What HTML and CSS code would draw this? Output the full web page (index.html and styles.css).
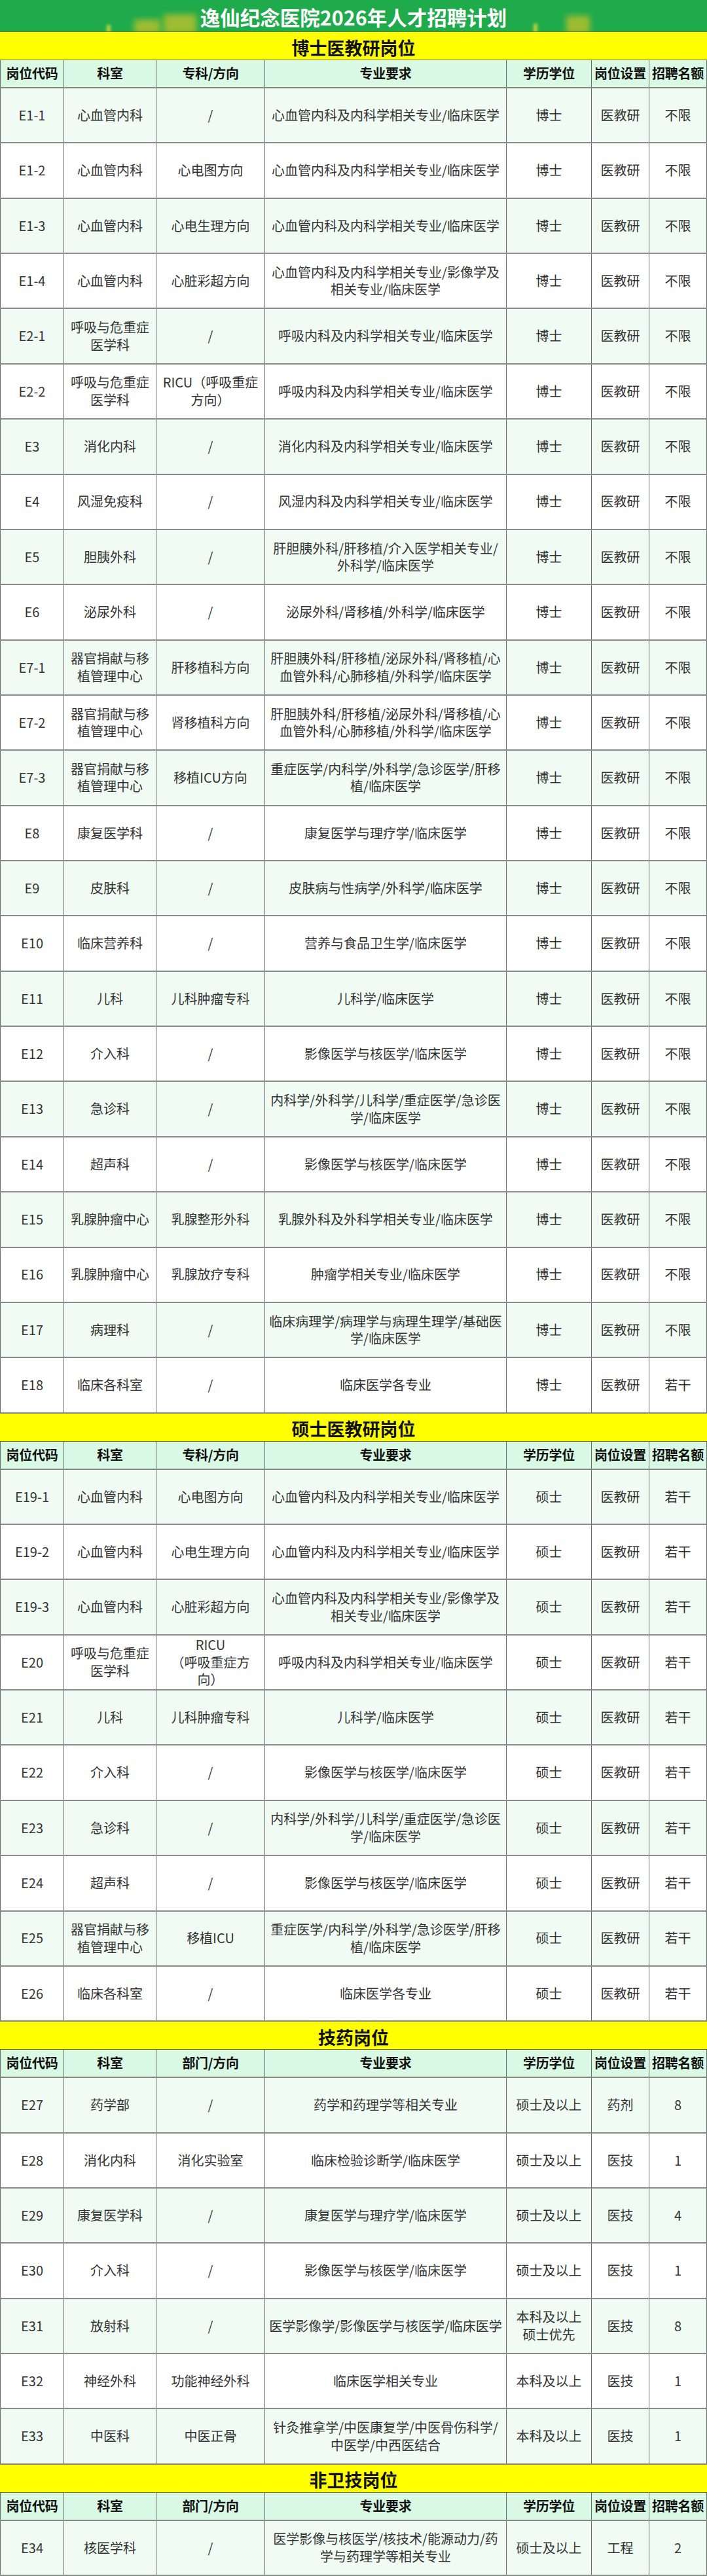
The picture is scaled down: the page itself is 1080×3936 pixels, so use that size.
FILE: index.html
```html
<!DOCTYPE html>
<html lang="zh-CN">
<head>
<meta charset="utf-8">
<title>逸仙纪念医院2026年人才招聘计划</title>
<link rel="stylesheet" href="styles.css">
</head>
<body>
<div class="page">
  <header class="title">
    <span class="deco d1"></span><span class="deco d2"></span><span class="deco d3"></span><span class="deco d4"></span><span class="deco d5"></span>
    <h1>逸仙纪念医院2026年人才招聘计划</h1>
  </header>

  <section class="sec">
    <div class="band">博士医教研岗位</div>
    <div class="row head"><div>岗位代码</div><div>科室</div><div>专科/方向</div><div>专业要求</div><div>学历学位</div><div>岗位设置</div><div>招聘名额</div></div>
    <div class="row m"><div>E1-1</div><div>心血管内科</div><div>/</div><div>心血管内科及内科学相关专业/临床医学</div><div>博士</div><div>医教研</div><div>不限</div></div>
    <div class="row"><div>E1-2</div><div>心血管内科</div><div>心电图方向</div><div>心血管内科及内科学相关专业/临床医学</div><div>博士</div><div>医教研</div><div>不限</div></div>
    <div class="row m"><div>E1-3</div><div>心血管内科</div><div>心电生理方向</div><div>心血管内科及内科学相关专业/临床医学</div><div>博士</div><div>医教研</div><div>不限</div></div>
    <div class="row"><div>E1-4</div><div>心血管内科</div><div>心脏彩超方向</div><div>心血管内科及内科学相关专业/影像学及<br>相关专业/临床医学</div><div>博士</div><div>医教研</div><div>不限</div></div>
    <div class="row m"><div>E2-1</div><div>呼吸与危重症<br>医学科</div><div>/</div><div>呼吸内科及内科学相关专业/临床医学</div><div>博士</div><div>医教研</div><div>不限</div></div>
    <div class="row"><div>E2-2</div><div>呼吸与危重症<br>医学科</div><div>RICU（呼吸重症<br>方向）</div><div>呼吸内科及内科学相关专业/临床医学</div><div>博士</div><div>医教研</div><div>不限</div></div>
    <div class="row m"><div>E3</div><div>消化内科</div><div>/</div><div>消化内科及内科学相关专业/临床医学</div><div>博士</div><div>医教研</div><div>不限</div></div>
    <div class="row"><div>E4</div><div>风湿免疫科</div><div>/</div><div>风湿内科及内科学相关专业/临床医学</div><div>博士</div><div>医教研</div><div>不限</div></div>
    <div class="row m"><div>E5</div><div>胆胰外科</div><div>/</div><div>肝胆胰外科/肝移植/介入医学相关专业/<br>外科学/临床医学</div><div>博士</div><div>医教研</div><div>不限</div></div>
    <div class="row"><div>E6</div><div>泌尿外科</div><div>/</div><div>泌尿外科/肾移植/外科学/临床医学</div><div>博士</div><div>医教研</div><div>不限</div></div>
    <div class="row m"><div>E7-1</div><div>器官捐献与移<br>植管理中心</div><div>肝移植科方向</div><div>肝胆胰外科/肝移植/泌尿外科/肾移植/心<br>血管外科/心肺移植/外科学/临床医学</div><div>博士</div><div>医教研</div><div>不限</div></div>
    <div class="row"><div>E7-2</div><div>器官捐献与移<br>植管理中心</div><div>肾移植科方向</div><div>肝胆胰外科/肝移植/泌尿外科/肾移植/心<br>血管外科/心肺移植/外科学/临床医学</div><div>博士</div><div>医教研</div><div>不限</div></div>
    <div class="row m"><div>E7-3</div><div>器官捐献与移<br>植管理中心</div><div>移植ICU方向</div><div>重症医学/内科学/外科学/急诊医学/肝移<br>植/临床医学</div><div>博士</div><div>医教研</div><div>不限</div></div>
    <div class="row"><div>E8</div><div>康复医学科</div><div>/</div><div>康复医学与理疗学/临床医学</div><div>博士</div><div>医教研</div><div>不限</div></div>
    <div class="row m"><div>E9</div><div>皮肤科</div><div>/</div><div>皮肤病与性病学/外科学/临床医学</div><div>博士</div><div>医教研</div><div>不限</div></div>
    <div class="row"><div>E10</div><div>临床营养科</div><div>/</div><div>营养与食品卫生学/临床医学</div><div>博士</div><div>医教研</div><div>不限</div></div>
    <div class="row m"><div>E11</div><div>儿科</div><div>儿科肿瘤专科</div><div>儿科学/临床医学</div><div>博士</div><div>医教研</div><div>不限</div></div>
    <div class="row"><div>E12</div><div>介入科</div><div>/</div><div>影像医学与核医学/临床医学</div><div>博士</div><div>医教研</div><div>不限</div></div>
    <div class="row m"><div>E13</div><div>急诊科</div><div>/</div><div>内科学/外科学/儿科学/重症医学/急诊医<br>学/临床医学</div><div>博士</div><div>医教研</div><div>不限</div></div>
    <div class="row"><div>E14</div><div>超声科</div><div>/</div><div>影像医学与核医学/临床医学</div><div>博士</div><div>医教研</div><div>不限</div></div>
    <div class="row m"><div>E15</div><div>乳腺肿瘤中心</div><div>乳腺整形外科</div><div>乳腺外科及外科学相关专业/临床医学</div><div>博士</div><div>医教研</div><div>不限</div></div>
    <div class="row"><div>E16</div><div>乳腺肿瘤中心</div><div>乳腺放疗专科</div><div>肿瘤学相关专业/临床医学</div><div>博士</div><div>医教研</div><div>不限</div></div>
    <div class="row m"><div>E17</div><div>病理科</div><div>/</div><div>临床病理学/病理学与病理生理学/基础医<br>学/临床医学</div><div>博士</div><div>医教研</div><div>不限</div></div>
    <div class="row"><div>E18</div><div>临床各科室</div><div>/</div><div>临床医学各专业</div><div>博士</div><div>医教研</div><div>若干</div></div>
  </section>

  <section class="sec">
    <div class="band">硕士医教研岗位</div>
    <div class="row head"><div>岗位代码</div><div>科室</div><div>专科/方向</div><div>专业要求</div><div>学历学位</div><div>岗位设置</div><div>招聘名额</div></div>
    <div class="row m"><div>E19-1</div><div>心血管内科</div><div>心电图方向</div><div>心血管内科及内科学相关专业/临床医学</div><div>硕士</div><div>医教研</div><div>若干</div></div>
    <div class="row"><div>E19-2</div><div>心血管内科</div><div>心电生理方向</div><div>心血管内科及内科学相关专业/临床医学</div><div>硕士</div><div>医教研</div><div>若干</div></div>
    <div class="row m"><div>E19-3</div><div>心血管内科</div><div>心脏彩超方向</div><div>心血管内科及内科学相关专业/影像学及<br>相关专业/临床医学</div><div>硕士</div><div>医教研</div><div>若干</div></div>
    <div class="row"><div>E20</div><div>呼吸与危重症<br>医学科</div><div>RICU<br>（呼吸重症方<br>向）</div><div>呼吸内科及内科学相关专业/临床医学</div><div>硕士</div><div>医教研</div><div>若干</div></div>
    <div class="row m"><div>E21</div><div>儿科</div><div>儿科肿瘤专科</div><div>儿科学/临床医学</div><div>硕士</div><div>医教研</div><div>若干</div></div>
    <div class="row"><div>E22</div><div>介入科</div><div>/</div><div>影像医学与核医学/临床医学</div><div>硕士</div><div>医教研</div><div>若干</div></div>
    <div class="row m"><div>E23</div><div>急诊科</div><div>/</div><div>内科学/外科学/儿科学/重症医学/急诊医<br>学/临床医学</div><div>硕士</div><div>医教研</div><div>若干</div></div>
    <div class="row"><div>E24</div><div>超声科</div><div>/</div><div>影像医学与核医学/临床医学</div><div>硕士</div><div>医教研</div><div>若干</div></div>
    <div class="row m"><div>E25</div><div>器官捐献与移<br>植管理中心</div><div>移植ICU</div><div>重症医学/内科学/外科学/急诊医学/肝移<br>植/临床医学</div><div>硕士</div><div>医教研</div><div>若干</div></div>
    <div class="row"><div>E26</div><div>临床各科室</div><div>/</div><div>临床医学各专业</div><div>硕士</div><div>医教研</div><div>若干</div></div>
  </section>

  <section class="sec">
    <div class="band">技药岗位</div>
    <div class="row head"><div>岗位代码</div><div>科室</div><div>部门/方向</div><div>专业要求</div><div>学历学位</div><div>岗位设置</div><div>招聘名额</div></div>
    <div class="row m"><div>E27</div><div>药学部</div><div>/</div><div>药学和药理学等相关专业</div><div>硕士及以上</div><div>药剂</div><div>8</div></div>
    <div class="row"><div>E28</div><div>消化内科</div><div>消化实验室</div><div>临床检验诊断学/临床医学</div><div>硕士及以上</div><div>医技</div><div>1</div></div>
    <div class="row m"><div>E29</div><div>康复医学科</div><div>/</div><div>康复医学与理疗学/临床医学</div><div>硕士及以上</div><div>医技</div><div>4</div></div>
    <div class="row"><div>E30</div><div>介入科</div><div>/</div><div>影像医学与核医学/临床医学</div><div>硕士及以上</div><div>医技</div><div>1</div></div>
    <div class="row m"><div>E31</div><div>放射科</div><div>/</div><div>医学影像学/影像医学与核医学/临床医学</div><div>本科及以上<br>硕士优先</div><div>医技</div><div>8</div></div>
    <div class="row"><div>E32</div><div>神经外科</div><div>功能神经外科</div><div>临床医学相关专业</div><div>本科及以上</div><div>医技</div><div>1</div></div>
    <div class="row m"><div>E33</div><div>中医科</div><div>中医正骨</div><div>针灸推拿学/中医康复学/中医骨伤科学/<br>中医学/中西医结合</div><div>本科及以上</div><div>医技</div><div>1</div></div>
  </section>

  <section class="sec">
    <div class="band">非卫技岗位</div>
    <div class="row head"><div>岗位代码</div><div>科室</div><div>部门/方向</div><div>专业要求</div><div>学历学位</div><div>岗位设置</div><div>招聘名额</div></div>
    <div class="row m"><div>E34</div><div>核医学科</div><div>/</div><div>医学影像与核医学/核技术/能源动力/药<br>学与药理学等相关专业</div><div>硕士及以上</div><div>工程</div><div>2</div></div>
  </section>
</div>
</body>
</html>
```

FILE: styles.css
```css
* { box-sizing: border-box; margin: 0; padding: 0; }

html, body {
  background: #ffffff;
}

body {
  font-family: "Noto Sans CJK SC", "Noto Sans", sans-serif;
  color: #333333;
}

.page {
  width: 1080px;
}

.title {
  position: relative;
  height: 49px;
  background: #1faa4b;
  display: flex;
  align-items: center;
  justify-content: center;
  overflow: hidden;
  border-bottom: 1px solid #5b7a2a;
}

.title h1 {
  position: relative;
  font-size: 30.5px;
  font-weight: 700;
  color: #ffffff;
  line-height: 1;
  padding-top: 5px;
  letter-spacing: 0;
}

.deco {
  position: absolute;
  bottom: -4px;
  background: #c9c22a;
  filter: blur(5px);
  opacity: 0.75;
}
.d1 { left: 163px; width: 6px; height: 14px; filter: blur(2px); background: #e6e23a; }
.d2 { left: 205px; width: 40px; height: 22px; }
.d3 { left: 250px; width: 50px; height: 30px; }
.d4 { left: 815px; width: 6px; height: 16px; filter: blur(2px); background: #e6e23a; }
.d5 { left: 865px; width: 36px; height: 28px; }

.band {
  height: 43px;
  background: #ffff00;
  border-bottom: 1px solid #6f6f4a;
  display: flex;
  align-items: center;
  justify-content: center;
  font-size: 27px;
  font-weight: 700;
  color: #111111;
  padding-top: 4px;
}

.row {
  display: grid;
  grid-template-columns: 97px 141px 166px 369px 130px 88px 89px;
  height: 84.36px;
  background: #ffffff;
  border-bottom: 2px solid #8a8a8a;
}

.row.m {
  background: #effbf3;
}

.row > div {
  display: flex;
  align-items: center;
  justify-content: center;
  text-align: center;
  border-left: 1px solid #6a6a6a;
  font-size: 20px;
  line-height: 26.5px;
  white-space: nowrap;
  overflow: visible;
}

.row > div:last-child {
  border-right: 1px solid #6a6a6a;
}

.row.head {
  height: 43px;
  background: #d9f9e4;
  border-bottom: 2px solid #7e8a80;
}

.row.head > div {
  font-weight: 700;
  color: #111111;
  font-size: 20px;
  letter-spacing: -0.3px;
}
```
